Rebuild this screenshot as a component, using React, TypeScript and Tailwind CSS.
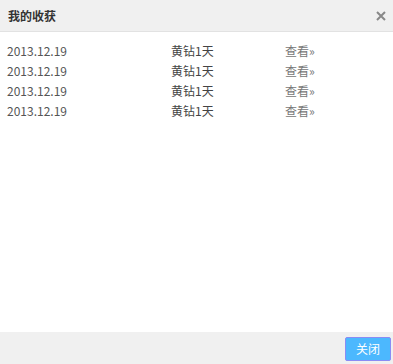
const rows = [
  { date: '2013.12.19', prize: '黄钻1天' },
  { date: '2013.12.19', prize: '黄钻1天' },
  { date: '2013.12.19', prize: '黄钻1天' },
  { date: '2013.12.19', prize: '黄钻1天' },
];

export default function App() {
  return (
    <div
      className="w-[393px] h-[364px] flex flex-col bg-white text-[12px] text-[#444]"
      style={{ fontFamily: '"Noto Sans CJK SC", "Liberation Sans", sans-serif' }}
    >
      {/* Header */}
      <div className="h-[32px] shrink-0 flex items-center justify-between pl-[8px] pr-[6px] bg-[#f0f0f0] border-b border-[#e2e2e2]">
        <h2 className="text-[12px] font-bold text-[#333]">我的收获</h2>
        <button className="w-[10px] h-[10px] flex items-center justify-center mr-[1px]">
          <svg viewBox="0 0 10 10" className="w-[10px] h-[10px]">
            <path d="M1 1 L9 9 M9 1 L1 9" stroke="#888" strokeWidth="2" />
          </svg>
        </button>
      </div>

      {/* Body */}
      <div className="flex-1 pt-[9px] px-[7px]">
        {rows.map((r, i) => (
          <div key={i} className="grid grid-cols-[164px_114px_1fr] h-[20px] items-center leading-[20px]">
            <span className="text-[#555]">{r.date}</span>
            <span className="text-[#444]">{r.prize}</span>
            <a className="text-[#777] cursor-pointer">查看»</a>
          </div>
        ))}
      </div>

      {/* Footer */}
      <div className="h-[32px] shrink-0 flex items-center justify-end pr-[2px] bg-[#f0f0f0]">
        <button className="w-[46px] h-[24px] mt-[2px] bg-[#4cb8fe] border border-[#8a8cf5] rounded-[2px] text-white text-[12px]">
          关闭
        </button>
      </div>
    </div>
  );
}
